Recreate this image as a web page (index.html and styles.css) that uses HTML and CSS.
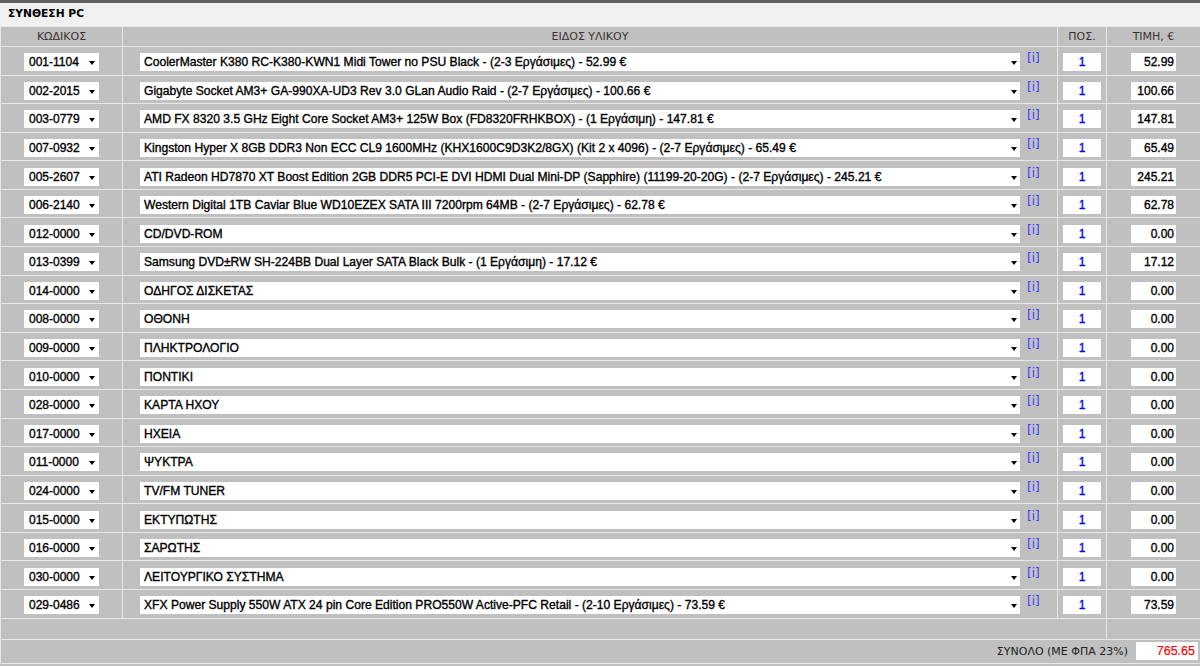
FILE: index.html
```html
<!DOCTYPE html>
<html lang="el">
<head>
<meta charset="utf-8">
<title>ΣΥΝΘΕΣΗ PC</title>
<link rel="stylesheet" href="styles.css">
</head>
<body>
<div class="titlebar">ΣΥΝΘΕΣΗ PC</div>
<table class="grid">
  <colgroup><col class="c1"><col class="c2"><col class="c3"><col class="c4"></colgroup>
  <thead>
    <tr class="head"><th>ΚΩΔΙΚΟΣ</th><th>ΕΙΔΟΣ ΥΛΙΚΟΥ</th><th>ΠΟΣ.</th><th>ΤΙΜΗ, €</th></tr>
  </thead>
  <tbody>
    <tr><td><div class="code"><span>001-1104</span><i class="arr"></i></div></td><td><div class="dcell"><div class="desc"><span>CoolerMaster K380 RC-K380-KWN1 Midi Tower no PSU Black - (2-3 Εργάσιμες) - 52.99 €</span><i class="arr"></i></div><span class="info">[i]</span></div></td><td><div class="qty">1</div></td><td><div class="price">52.99</div></td></tr>
    <tr><td><div class="code"><span>002-2015</span><i class="arr"></i></div></td><td><div class="dcell"><div class="desc"><span>Gigabyte Socket AM3+ GA-990XA-UD3 Rev 3.0 GLan Audio Raid - (2-7 Εργάσιμες) - 100.66 €</span><i class="arr"></i></div><span class="info">[i]</span></div></td><td><div class="qty">1</div></td><td><div class="price">100.66</div></td></tr>
    <tr><td><div class="code"><span>003-0779</span><i class="arr"></i></div></td><td><div class="dcell"><div class="desc"><span>AMD FX 8320 3.5 GHz Eight Core Socket AM3+ 125W Box (FD8320FRHKBOX) - (1 Εργάσιμη) - 147.81 €</span><i class="arr"></i></div><span class="info">[i]</span></div></td><td><div class="qty">1</div></td><td><div class="price">147.81</div></td></tr>
    <tr><td><div class="code"><span>007-0932</span><i class="arr"></i></div></td><td><div class="dcell"><div class="desc"><span>Kingston Hyper X 8GB DDR3 Non ECC CL9 1600MHz (KHX1600C9D3K2/8GX) (Kit 2 x 4096) - (2-7 Εργάσιμες) - 65.49 €</span><i class="arr"></i></div><span class="info">[i]</span></div></td><td><div class="qty">1</div></td><td><div class="price">65.49</div></td></tr>
    <tr><td><div class="code"><span>005-2607</span><i class="arr"></i></div></td><td><div class="dcell"><div class="desc"><span>ATI Radeon HD7870 XT Boost Edition 2GB DDR5 PCI-E DVI HDMI Dual Mini-DP (Sapphire) (11199-20-20G) - (2-7 Εργάσιμες) - 245.21 €</span><i class="arr"></i></div><span class="info">[i]</span></div></td><td><div class="qty">1</div></td><td><div class="price">245.21</div></td></tr>
    <tr><td><div class="code"><span>006-2140</span><i class="arr"></i></div></td><td><div class="dcell"><div class="desc"><span>Western Digital 1TB Caviar Blue WD10EZEX SATA III 7200rpm 64MB - (2-7 Εργάσιμες) - 62.78 €</span><i class="arr"></i></div><span class="info">[i]</span></div></td><td><div class="qty">1</div></td><td><div class="price">62.78</div></td></tr>
    <tr><td><div class="code"><span>012-0000</span><i class="arr"></i></div></td><td><div class="dcell"><div class="desc"><span>CD/DVD-ROM</span><i class="arr"></i></div><span class="info">[i]</span></div></td><td><div class="qty">1</div></td><td><div class="price">0.00</div></td></tr>
    <tr><td><div class="code"><span>013-0399</span><i class="arr"></i></div></td><td><div class="dcell"><div class="desc"><span>Samsung DVD±RW SH-224BB Dual Layer SATA Black Bulk - (1 Εργάσιμη) - 17.12 €</span><i class="arr"></i></div><span class="info">[i]</span></div></td><td><div class="qty">1</div></td><td><div class="price">17.12</div></td></tr>
    <tr><td><div class="code"><span>014-0000</span><i class="arr"></i></div></td><td><div class="dcell"><div class="desc"><span>ΟΔΗΓΟΣ ΔΙΣΚΕΤΑΣ</span><i class="arr"></i></div><span class="info">[i]</span></div></td><td><div class="qty">1</div></td><td><div class="price">0.00</div></td></tr>
    <tr><td><div class="code"><span>008-0000</span><i class="arr"></i></div></td><td><div class="dcell"><div class="desc"><span>ΟΘΟΝΗ</span><i class="arr"></i></div><span class="info">[i]</span></div></td><td><div class="qty">1</div></td><td><div class="price">0.00</div></td></tr>
    <tr><td><div class="code"><span>009-0000</span><i class="arr"></i></div></td><td><div class="dcell"><div class="desc"><span>ΠΛΗΚΤΡΟΛΟΓΙΟ</span><i class="arr"></i></div><span class="info">[i]</span></div></td><td><div class="qty">1</div></td><td><div class="price">0.00</div></td></tr>
    <tr><td><div class="code"><span>010-0000</span><i class="arr"></i></div></td><td><div class="dcell"><div class="desc"><span>ΠΟΝΤΙΚΙ</span><i class="arr"></i></div><span class="info">[i]</span></div></td><td><div class="qty">1</div></td><td><div class="price">0.00</div></td></tr>
    <tr><td><div class="code"><span>028-0000</span><i class="arr"></i></div></td><td><div class="dcell"><div class="desc"><span>ΚΑΡΤΑ ΗΧΟΥ</span><i class="arr"></i></div><span class="info">[i]</span></div></td><td><div class="qty">1</div></td><td><div class="price">0.00</div></td></tr>
    <tr><td><div class="code"><span>017-0000</span><i class="arr"></i></div></td><td><div class="dcell"><div class="desc"><span>ΗΧΕΙΑ</span><i class="arr"></i></div><span class="info">[i]</span></div></td><td><div class="qty">1</div></td><td><div class="price">0.00</div></td></tr>
    <tr><td><div class="code"><span>011-0000</span><i class="arr"></i></div></td><td><div class="dcell"><div class="desc"><span>ΨΥΚΤΡΑ</span><i class="arr"></i></div><span class="info">[i]</span></div></td><td><div class="qty">1</div></td><td><div class="price">0.00</div></td></tr>
    <tr><td><div class="code"><span>024-0000</span><i class="arr"></i></div></td><td><div class="dcell"><div class="desc"><span>TV/FM TUNER</span><i class="arr"></i></div><span class="info">[i]</span></div></td><td><div class="qty">1</div></td><td><div class="price">0.00</div></td></tr>
    <tr><td><div class="code"><span>015-0000</span><i class="arr"></i></div></td><td><div class="dcell"><div class="desc"><span>ΕΚΤΥΠΩΤΗΣ</span><i class="arr"></i></div><span class="info">[i]</span></div></td><td><div class="qty">1</div></td><td><div class="price">0.00</div></td></tr>
    <tr><td><div class="code"><span>016-0000</span><i class="arr"></i></div></td><td><div class="dcell"><div class="desc"><span>ΣΑΡΩΤΗΣ</span><i class="arr"></i></div><span class="info">[i]</span></div></td><td><div class="qty">1</div></td><td><div class="price">0.00</div></td></tr>
    <tr><td><div class="code"><span>030-0000</span><i class="arr"></i></div></td><td><div class="dcell"><div class="desc"><span>ΛΕΙΤΟΥΡΓΙΚΟ ΣΥΣΤΗΜΑ</span><i class="arr"></i></div><span class="info">[i]</span></div></td><td><div class="qty">1</div></td><td><div class="price">0.00</div></td></tr>
    <tr><td><div class="code"><span>029-0486</span><i class="arr"></i></div></td><td><div class="dcell"><div class="desc"><span>XFX Power Supply 550W ATX 24 pin Core Edition PRO550W Active-PFC Retail - (2-10 Εργάσιμες) - 73.59 €</span><i class="arr"></i></div><span class="info">[i]</span></div></td><td><div class="qty">1</div></td><td><div class="price">73.59</div></td></tr>
  </tbody>
  <tfoot>
    <tr class="blank"><td colspan="3"></td><td></td></tr>
    <tr class="total"><td colspan="4"><div class="totline"><span class="totlabel">ΣΥΝΟΛΟ (ΜΕ ΦΠΑ 23%)</span><div class="totbox">765.65</div></div></td></tr>
  </tfoot>
</table>
</body>
</html>
```
FILE: styles.css
```css
html, body {
  margin: 0;
  padding: 0;
}
body {
  background: #c0c0c0;
  font-family: "Liberation Sans", Arial, sans-serif;
  font-size: 12px;
  color: #000;
  width: 1200px;
  height: 666px;
  overflow: hidden;
}
.titlebar {
  border-top: 3px solid #5f5f5f;
  background: #f0f0f0;
  padding-left: 8px;
  font-family: "DejaVu Sans", sans-serif;
  font-weight: bold;
  font-size: 10.7px;
  box-sizing: border-box;
  height: 26px;
  line-height: 21px;
}
.grid {
  width: 1200px;
  border-collapse: collapse;
  table-layout: fixed;
}
.c1 { width: 122px; }
.c2 { width: 935px; }
.c3 { width: 49px; }
.c4 { width: 94px; }
.grid th, .grid td {
  border: 1px solid #e6e6e6;
  padding: 0;
  background: #c0c0c0;
}
.grid th {
  height: 19px;
  font-weight: normal;
  color: #3a3232;
  font-family: "DejaVu Sans", sans-serif;
  font-size: 11px;
  text-align: center;
  vertical-align: middle;
}
.grid tbody td {
  height: 27.58px;
  vertical-align: middle;
  padding-top: 3px;
  box-sizing: border-box;
}
.grid tbody tr { height: 28.58px; }
.code, .desc, .qty, .price, .totbox {
  background: #fff;
  height: 18px;
  line-height: 18px;
  box-sizing: border-box;
  -webkit-text-stroke: 0.35px #000;
}
.code {
  width: 75px;
  margin: 0 auto;
  display: flex;
  align-items: center;
  padding-left: 5px;
  position: relative;
  font-size: 12px;
}
.arr {
  position: absolute;
  width: 0;
  height: 0;
  border-left: 3.5px solid transparent;
  border-right: 3.5px solid transparent;
  border-top: 4px solid #000;
  top: 8px;
}
.code .arr { right: 4px; }
.dcell {
  display: flex;
  align-items: flex-start;
  padding-left: 17px;
}
.desc {
  width: 880px;
  padding-left: 4px;
  position: relative;
  white-space: nowrap;
  overflow: hidden;
  font-size: 12.1px;
}
.desc .arr { right: 3px; }
.info {
  margin-left: 7px;
  color: #3c3cff;
  font-family: "DejaVu Sans", sans-serif;
  font-size: 12px;
  line-height: 12px;
  margin-top: -1px;
}
.qty {
  width: 38px;
  margin: 0 auto;
  text-align: center;
  color: #0000ee;
  font-size: 12px;
  -webkit-text-stroke: 0.35px #0000ee;
}
.price {
  width: 45px;
  margin: 0 auto;
  text-align: right;
  padding-right: 2px;
  font-size: 12px;
}
.blank td { height: 20px; }
.total td { height: 23px; vertical-align: middle; }
.totline {
  display: flex;
  justify-content: flex-end;
  align-items: center;
  gap: 8px;
  padding-right: 2px;
}
.totlabel {
  color: #222;
  font-family: "DejaVu Sans", sans-serif;
  font-size: 11px;
}
.totbox {
  width: 62px;
  color: #ff0000;
  text-align: right;
  padding-right: 3px;
  font-size: 12.5px;
  -webkit-text-stroke: 0.2px #ff0000;
}
```
